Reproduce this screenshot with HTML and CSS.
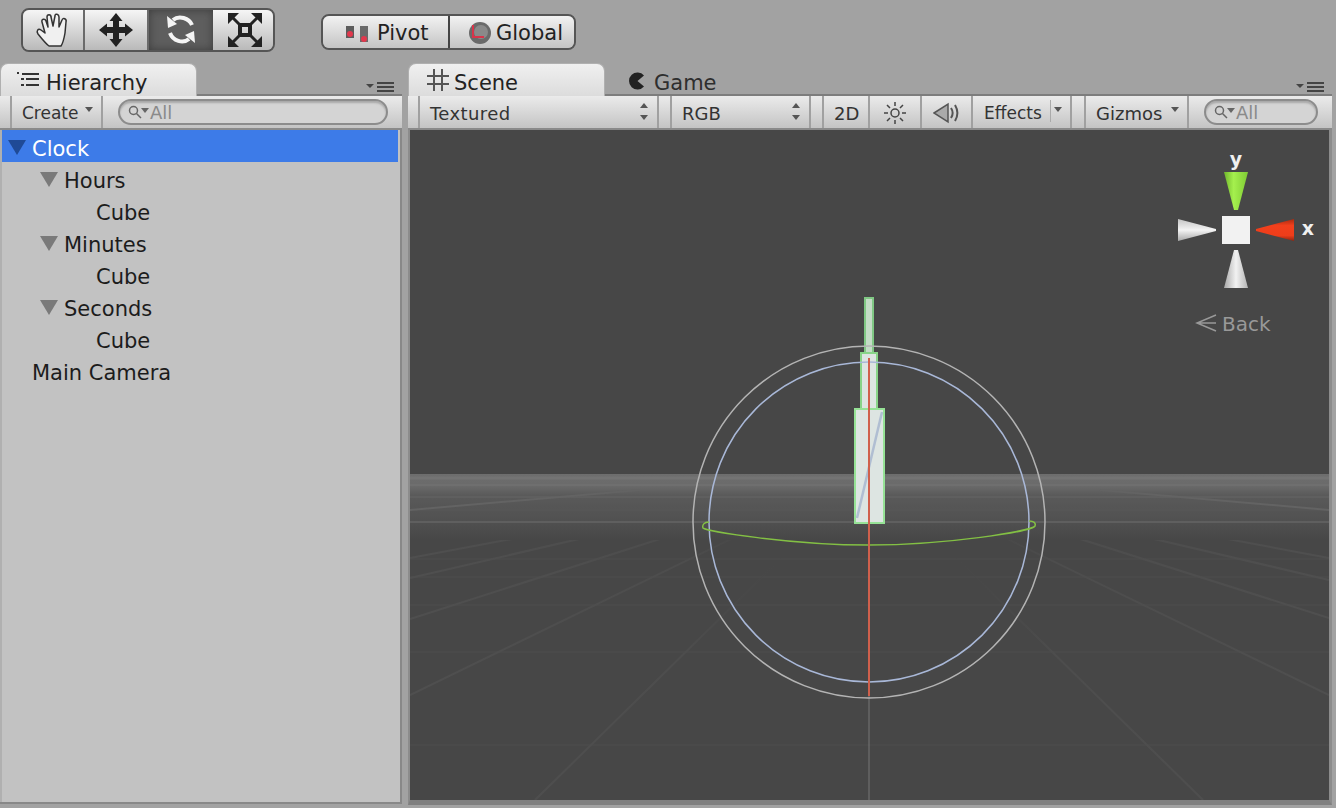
FILE: index.html
```html
<!DOCTYPE html>
<html lang="en">
<head>
    <meta charset="UTF-8">
    <meta name="viewport" content="width=device-width, initial-scale=1.0">
    <title>Scene - Clock</title>
    <link rel="stylesheet" href="styles.css">
</head>
<body>
    <div class="toolbar">
        <div class="tools">
            <div class="tool">
                <svg width="36" height="36" viewBox="0 0 36 36"><path d="M14 34C11 32 7 27 3 22C1 19 3 16 6 18L10 21L7 10C6 7 10 6 11 9L13 15L12 5C12 2 16 2 16 5L18 14L20 4C20 1 24 2 24 5L24 15L27 8C28 5 32 7 31 10L30 21C29 27 28 31 26 34Z" fill="#f0f0f0" stroke="#333" stroke-width="1.500" stroke-linejoin="round"/></svg>
            </div>
            <div class="tool">
                <svg width="36" height="36" viewBox="0 0 36 36"><path d="M18 1L24.500 9H21V15H27V11.500L35 18L27 24.500V21H21V27H24.500L18 35L11.500 27H15V21H9V24.500L1 18L9 11.500V15H15V9H11.500Z" fill="#222"/></svg>
            </div>
            <div class="tool tool-on">
                <svg width="34" height="34" viewBox="0 0 34 34" fill="none" stroke="#f4f4f4" stroke-width="4"><path d="M28 12C25 5 15 2 9 7"/><path d="M6 20C9 28 19 31 25 26"/><path d="M3 3L13 11L4 15Z" fill="#f4f4f4" stroke="none"/><path d="M31 30L21 22L30 18Z" fill="#f4f4f4" stroke="none"/></svg>
            </div>
            <div class="tool tool-scale">
                <svg width="36" height="36" viewBox="0 0 36 36" fill="#222"><path d="M11 11H25V25H11ZM15 15V21H21V15Z" fill-rule="evenodd"/><path d="M1 1H12L1 12ZM35 1H24L35 12ZM1 35H12L1 24ZM35 35H24L35 24Z"/><path d="M4 4L12 12M32 4L24 12M4 32L12 24M32 32L24 24" stroke="#222" stroke-width="3"/></svg>
            </div>
        </div>
        <div class="handles">
            <div class="handle handle-pivot">
                <svg width="28" height="20" viewBox="0 0 28 20"><rect x="1" y="3" width="8" height="12" fill="#5c5c5c"/><circle cx="5" cy="11" r="3" fill="#e2384d"/><rect x="15" y="3" width="8" height="16" fill="#6a6a6a"/><circle cx="19" cy="16" r="3" fill="#e2384d"/></svg>
                <span>Pivot</span>
            </div>
            <div class="handle handle-global">
                <svg width="24" height="24" viewBox="0 0 24 24"><circle cx="12" cy="12" r="11" fill="#6a6a6a"/><circle cx="13" cy="11" r="7" fill="#8a8a8a"/><path d="M5 4V16H16" fill="none" stroke="#d8344a" stroke-width="2"/></svg>
                <span>Global</span>
            </div>
        </div>
    </div>

    <div class="panes">
        <div class="pane pane-left">
            <div class="tabs">
                <div class="tab tab-left">
                    <svg width="22" height="16" viewBox="0 0 22 16" fill="#333"><rect x="0" y="0" width="2" height="2"/><rect x="5" y="1" width="17" height="2"/><rect x="4" y="6" width="3" height="2"/><rect x="9" y="6" width="13" height="2"/><rect x="4" y="12" width="3" height="2"/><rect x="9" y="12" width="13" height="2"/></svg>
                    <span>Hierarchy</span>
                </div>
                <svg class="pane-menu" width="28" height="10" viewBox="0 0 28 10" fill="#444"><path d="M0 2H8L4 6Z"/><rect x="11" y="0" width="17" height="2"/><rect x="11" y="4" width="17" height="2"/><rect x="11" y="8" width="17" height="2"/></svg>
            </div>
            <div class="subbar subbar-left">
                <div class="item item-create">Create<i class="caret"></i></div>
                <div class="search search-wide"><svg class="lens" width="22" height="14" viewBox="0 0 22 14" fill="none" stroke="#666" stroke-width="1.500"><circle cx="5.500" cy="5.500" r="4"/><path d="M8.500 8.500L13 13"/><path d="M13 3H21L17 8Z" fill="#666" stroke="none"/></svg>All</div>
            </div>
            <ul class="tree">
                <li class="row row-selected"><i class="fold fold-selected"></i>Clock</li>
                <li class="row depth-1"><i class="fold"></i>Hours</li>
                <li class="row depth-2">Cube</li>
                <li class="row depth-1"><i class="fold"></i>Minutes</li>
                <li class="row depth-2">Cube</li>
                <li class="row depth-1"><i class="fold"></i>Seconds</li>
                <li class="row depth-2">Cube</li>
                <li class="row">Main Camera</li>
            </ul>
        </div>

        <div class="pane pane-right">
            <div class="tabs">
                <div class="tab tab-scene">
                    <svg width="22" height="22" viewBox="0 0 22 22" fill="none" stroke="#555" stroke-width="2"><path d="M7 0V22M15 0V22M0 7H22M0 15H22"/></svg>
                    <span>Scene</span>
                </div>
                <div class="tab-off">
                    <svg width="17" height="18" viewBox="0 0 17 18"><path d="M16 3.500A8.500 8.500 0 1 0 16 14.500L9.500 9Z" fill="#222"/></svg>
                    <span>Game</span>
                </div>
                <svg class="pane-menu" width="28" height="10" viewBox="0 0 28 10" fill="#444"><path d="M0 2H8L4 6Z"/><rect x="11" y="0" width="17" height="2"/><rect x="11" y="4" width="17" height="2"/><rect x="11" y="8" width="17" height="2"/></svg>
            </div>
            <div class="subbar subbar-right">
                <div class="item item-draw">Textured<i class="updown"></i></div>
                <div class="item item-rgb">RGB<i class="updown"></i></div>
                <div class="item item-2d">2D</div>
                <div class="item item-icon">
                    <svg width="22" height="22" viewBox="0 0 22 22" fill="none" stroke="#444" stroke-width="1.500"><circle cx="11" cy="11" r="4"/><path d="M11 0V4M11 18V22M0 11H4M18 11H22M3 3L6 6M16 16L19 19M3 19L6 16M16 6L19 3"/></svg>
                </div>
                <div class="item item-icon item-sound">
                    <svg width="28" height="24" viewBox="0 0 28 24" fill="none" stroke="#555" stroke-width="2"><path d="M1 12L15 3V21Z" fill="#aaa" stroke-width="1.500"/><path d="M18 7C20 10 20 14 18 17"/><path d="M22 4C25 9 25 15 22 20"/></svg>
                </div>
                <div class="item item-effects">Effects<b class="split"></b><i class="caret"></i></div>
                <div class="item item-gizmos">Gizmos<i class="caret"></i></div>
                <div class="search search-small"><svg class="lens" width="22" height="14" viewBox="0 0 22 14" fill="none" stroke="#666" stroke-width="1.500"><circle cx="5.500" cy="5.500" r="4"/><path d="M8.500 8.500L13 13"/><path d="M13 3H21L17 8Z" fill="#666" stroke="none"/></svg>All</div>
            </div>
            <div class="view">
                <svg class="scene" width="919" height="670" viewBox="410 130 919 670">
                    <defs>
                        <linearGradient id="band" x1="0" y1="0" x2="0" y2="1">
                            <stop offset="0" stop-color="#6e6e6e"/>
                            <stop offset="0.18" stop-color="#6a6a6a"/>
                            <stop offset="0.32" stop-color="#5a5a5a"/>
                            <stop offset="0.7" stop-color="#515151"/>
                            <stop offset="1" stop-color="#474747"/>
                        </linearGradient>
                        <linearGradient id="fade" gradientUnits="userSpaceOnUse" x1="410" y1="0" x2="1329" y2="0">
                            <stop offset="0" stop-color="#4f4f4f"/>
                            <stop offset="0.3" stop-color="#4d4d4d"/>
                            <stop offset="0.42" stop-color="#474747" stop-opacity="0"/>
                            <stop offset="0.58" stop-color="#474747" stop-opacity="0"/>
                            <stop offset="0.7" stop-color="#4d4d4d"/>
                            <stop offset="1" stop-color="#4f4f4f"/>
                        </linearGradient>
                        <linearGradient id="coneGreen" x1="0" y1="0" x2="1" y2="0">
                            <stop offset="0" stop-color="#6fb52c"/>
                            <stop offset="0.4" stop-color="#a5f04e"/>
                            <stop offset="1" stop-color="#7fcb34"/>
                        </linearGradient>
                        <linearGradient id="coneRed" x1="0" y1="0" x2="0" y2="1">
                            <stop offset="0" stop-color="#a92b10"/>
                            <stop offset="0.3" stop-color="#f2401c"/>
                            <stop offset="0.75" stop-color="#ee3d1a"/>
                            <stop offset="1" stop-color="#8e2410"/>
                        </linearGradient>
                        <linearGradient id="coneLeft" x1="0" y1="0" x2="0" y2="1">
                            <stop offset="0" stop-color="#c4c4c4"/>
                            <stop offset="0.5" stop-color="#f4f4f4"/>
                            <stop offset="1" stop-color="#a8a8a8"/>
                        </linearGradient>
                        <linearGradient id="coneDown" x1="0" y1="0" x2="1" y2="0">
                            <stop offset="0" stop-color="#a8a8a8"/>
                            <stop offset="0.5" stop-color="#f2f2f2"/>
                            <stop offset="1" stop-color="#b4b4b4"/>
                        </linearGradient>
                    </defs>

                    <!-- grid lines, under the horizon band -->
                    <g stroke-width="2" fill="none">
                        <path d="M410 559H1329M410 577H1329M410 605H1329M410 652H1329M410 745H1329" stroke="#4a4a4a"/>
                        <path d="M410 535L869 472M410 558L869 472M410 578L869 472M410 619L869 472M410 695L869 472M535 800L869 472" stroke="url(#fade)"/>
                        <path d="M1329 535L869 472M1329 558L869 472M1329 580L869 472M1329 618L869 472M1329 695L869 472M1203 800L869 472" stroke="url(#fade)"/>
                        <path d="M869 696V800" stroke="#777" stroke-width="1"/>
                    </g>

                    <!-- horizon band -->
                    <rect x="410" y="474" width="919" height="66" fill="url(#band)"/>
                    <g fill="none">
                        <path d="M410 478H1329" stroke="#747474" stroke-width="3"/>
                        <path d="M410 485H1329" stroke="#6f6f6f" stroke-width="2"/>
                        <path d="M410 497H1329" stroke="#5f5f5f" stroke-width="2"/>
                        <path d="M410 510H1329" stroke="#565656" stroke-width="2"/>
                        <path d="M410 522H1329" stroke="#5f5f5f" stroke-width="2"/>
                        <path d="M410 510L640 490M1329 510L1100 490" stroke="#636363" stroke-width="2"/>
                    </g>

                    <!-- clock hands -->
                    <rect x="865" y="298" width="8" height="56" fill="#c4dcc6" stroke="#80c884" stroke-width="2"/>
                    <rect x="861" y="353" width="16" height="56" fill="#dde5e2" stroke="#88d488" stroke-width="2"/>
                    <rect x="855" y="409" width="29" height="114" fill="#dde5e2" stroke="#96e296" stroke-width="2"/>
                    <path d="M857 518L882 412" stroke="#b0bed2" stroke-width="2.500"/>

                    <!-- rotation gizmo -->
                    <circle cx="869" cy="522" r="176" fill="none" stroke="#b4b4b4" stroke-width="1.500"/>
                    <circle cx="869" cy="522" r="160" fill="none" stroke="#a9b8d8" stroke-width="1.500"/>
                    <path d="M709 522C704 522 702 525 703 528C706 531 790 545 869 545C948 545 1032 531 1035 526C1036 523 1034 521 1029 521" fill="none" stroke="#83c044" stroke-width="1.500"/>
                    <path d="M869 358V696" stroke="#d0604c" stroke-width="2"/>

                    <!-- orientation gizmo -->
                    <path d="M1224 172H1248L1238 210H1234Z" fill="url(#coneGreen)"/>
                    <path d="M1294 219V241L1256 231V229Z" fill="url(#coneRed)"/>
                    <path d="M1178 219V241L1216 231V229Z" fill="url(#coneLeft)"/>
                    <path d="M1224 288H1248L1238 250H1234Z" fill="url(#coneDown)"/>
                    <rect x="1222" y="216" width="28" height="28" fill="#f2f2f2"/>
                    <text class="axis" x="1236" y="166">y</text>
                    <text class="axis" x="1308" y="235">x</text>
                    <path d="M1216 315L1197 323L1216 331M1197 323H1216" fill="none" stroke="#999" stroke-width="1.500"/>
                    <text class="back" x="1222" y="331">Back</text>
                </svg>
            </div>
        </div>
    </div>
</body>
</html>
```
FILE: styles.css
```css
* {
    box-sizing: border-box;
}
html, body {
    margin: 0;
    height: 808px;
    overflow: hidden;
}
body {
    font-family: "DejaVu Sans", sans-serif;
    font-size: 21px;
    color: #222;
    background-color: #a2a2a2;
}

/* top toolbar */
.toolbar {
    display: flex;
    height: 63px;
    padding-left: 21px;
}
.tools {
    display: flex;
    width: 254px;
    height: 44px;
    margin-top: 8px;
    border: 2px solid #555;
    border-radius: 8px;
    overflow: hidden;
}
.tool {
    width: 64px;
    display: flex;
    align-items: center;
    justify-content: center;
    background: linear-gradient(#f5f5f5, #b9b9b9);
    border-right: 2px solid #6a6a6a;
}
.tool:first-child {
    width: 62px;
}
.tool:last-child {
    width: 60px;
    border-right: none;
}
.tool-on {
    background: #5e5e5e;
    box-shadow: inset 0 0 8px #3c3c3c;
    border-right: none;
}
.tool-scale {
    padding-left: 3px;
}
.handles {
    display: flex;
    width: 255px;
    height: 36px;
    margin: 14px 0 0 46px;
    border: 2px solid #555;
    border-radius: 8px;
    overflow: hidden;
}
.handle {
    display: flex;
    align-items: center;
    padding-top: 2px;
    background: linear-gradient(#f2f2f2, #c4c4c4);
}
.handle-pivot {
    width: 127px;
    padding-left: 22px;
    gap: 4px;
    border-right: 2px solid #444;
}
.handle-global {
    flex: 1;
    padding-left: 18px;
    gap: 4px;
}

/* panes */
.panes {
    display: flex;
    gap: 6px;
}
.pane {
    position: relative;
}
.pane-left {
    width: 402px;
}
.pane-right {
    width: 924px;
}
.tabs {
    position: relative;
    display: flex;
    height: 33px;
    border-bottom: 2px solid #7d7d7d;
}
.tab {
    display: flex;
    align-items: center;
    height: 33px;
    background: linear-gradient(#f0f0f0, #dcdcdc);
    border: 1px solid #b0b0b0;
    border-bottom: none;
    border-radius: 8px 8px 0 0;
    line-height: 1;
}
.tab span {
    margin-top: 7px;
}
.tab-left {
    width: 197px;
    padding-left: 16px;
    gap: 7px;
}
.tab-scene {
    width: 197px;
    padding-left: 18px;
    gap: 5px;
}
.tab-off {
    display: flex;
    align-items: center;
    gap: 9px;
    margin-left: 23px;
    padding-top: 9px;
    color: #2e2e2e;
}
.tab-off svg {
    margin-top: -5px;
}
.pane-menu {
    position: absolute;
    right: 8px;
    bottom: 2px;
}

/* sub toolbars */
.subbar {
    display: flex;
    align-items: stretch;
    height: 34px;
    background: linear-gradient(#ebebeb, #c4c4c4);
    border-bottom: 2px solid #8a8a8a;
    font-size: 18px;
    color: #333;
    padding-left: 10px;
}
.item {
    display: flex;
    align-items: center;
    padding-top: 2px;
    padding-left: 10px;
    border-left: 2px solid #a0a0a0;
    position: relative;
}
.item-create {
    width: 93px;
    font-size: 17px;
    border-right: 2px solid #a0a0a0;
}
.item-draw {
    width: 241px;
    letter-spacing: 0.4px;
    border-right: 2px solid #a0a0a0;
}
.item-rgb {
    width: 141px;
    margin-left: 11px;
    border-right: 2px solid #a0a0a0;
}
.item-2d {
    width: 46px;
    margin-left: 11px;
}
.item-icon {
    width: 52px;
    padding-left: 0;
    justify-content: center;
}
.item-sound {
    width: 53px;
    border-right: 2px solid #a0a0a0;
}
.item-effects {
    width: 99px;
    padding-left: 11px;
    font-size: 17px;
    border-left: none;
    border-right: 2px solid #a0a0a0;
}
.item-gizmos {
    width: 105px;
    margin-left: 12px;
    border-right: 2px solid #a0a0a0;
}
.split {
    position: absolute;
    left: 77px;
    top: 4px;
    bottom: 6px;
    border-left: 1px solid #aaa;
}
.caret {
    position: absolute;
    right: 8px;
    top: 11px;
    border: 4px solid transparent;
    border-top: 5px solid #555;
}
.updown {
    position: absolute;
    right: 9px;
    top: 9px;
    width: 8px;
    height: 14px;
}
.updown::before, .updown::after {
    content: "";
    position: absolute;
    left: 0;
    border: 4px solid transparent;
}
.updown::before {
    top: -2px;
    border-top: none;
    border-bottom: 5px solid #555;
}
.updown::after {
    bottom: -1px;
    border-bottom: none;
    border-top: 5px solid #555;
}
.search {
    display: flex;
    align-items: center;
    height: 26px;
    margin-top: 3px;
    padding-left: 8px;
    border: 2px solid #8c8c8c;
    border-radius: 13px;
    background: #d4d4d4;
    box-shadow: inset 0 2px 2px #a8a8a8;
    color: #8a8a8a;
}
.search-wide {
    width: 270px;
    margin-left: 15px;
}
.search-small {
    width: 114px;
    margin-left: 15px;
}

/* hierarchy */
.tree {
    list-style: none;
    margin: 0;
    padding: 0 2px 0 2px;
    height: 674px;
    background: #c2c2c2;
    border-right: 2px solid #888;
    border-bottom: 2px solid #888;
    box-shadow: inset 2px 0 0 #b0b0b0;
}
.row {
    position: relative;
    height: 32px;
    line-height: 38px;
    padding-left: 30px;
    color: #1c1c1c;
}
.row-selected {
    background: #3d7be8;
    color: #fff;
}
.depth-1 {
    padding-left: 62px;
}
.depth-2 {
    padding-left: 94px;
}
.fold {
    position: absolute;
    top: 10px;
    left: 38px;
    border: 9px solid transparent;
    border-top: 15px solid #7a7a7a;
    border-bottom: none;
}
.fold-selected {
    left: 6px;
    border-top-color: #1f4a96;
}

/* scene view */
.view {
    height: 675px;
    border-left: 2px solid #8c8c8c;
    border-right: 3px solid #8c8c8c;
    border-bottom: 5px solid #808080;
    background: #474747;
    overflow: hidden;
}
.scene {
    display: block;
}
.axis {
    font-size: 19px;
    font-weight: bold;
    fill: #f0f0f0;
    text-anchor: middle;
}
.back {
    font-size: 20px;
    fill: #999;
}
```
